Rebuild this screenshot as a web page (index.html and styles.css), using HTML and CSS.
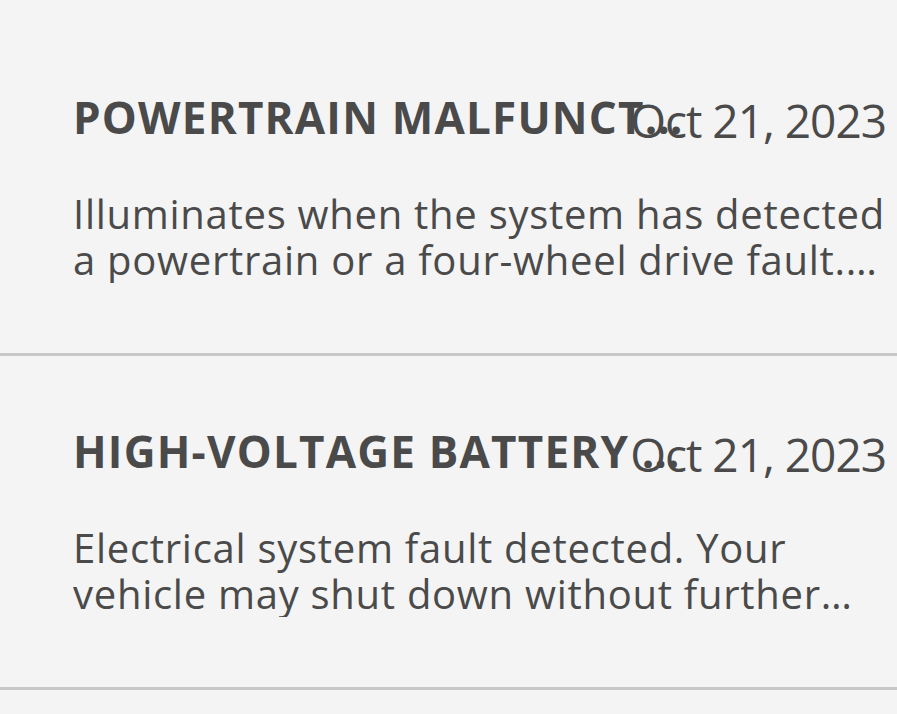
FILE: index.html
```html
<!DOCTYPE html>
<html>
<head>
<meta charset="utf-8">
<link rel="stylesheet" href="styles.css">
</head>
<body>
<ul class="alerts">
  <li class="alert">
    <div class="alert-head">
      <h2 class="alert-title">POWERTRAIN MALFUNCTION</h2>
      <span class="alert-date">Oct 21, 2023</span>
    </div>
    <p class="alert-desc">Illuminates when the system has detected a powertrain or a four-wheel drive fault. Contact an authorized dealer as soon as possible.</p>
  </li>
  <li class="alert">
    <div class="alert-head">
      <h2 class="alert-title">HIGH-VOLTAGE BATTERY FAULT</h2>
      <span class="alert-date">Oct 21, 2023</span>
    </div>
    <p class="alert-desc">Electrical system fault detected. Your vehicle may shut down without further warning. Contact an authorized dealer.</p>
  </li>
</ul>
</body>
</html>
```

FILE: styles.css
```css
html, body {
  margin: 0;
  padding: 0;
  background: #f4f4f4;
}
body {
  font-family: "Open Sans", "Liberation Sans", sans-serif;
  color: #4a4a4a;
}
.alerts {
  list-style: none;
  margin: 0;
  padding: 22px 0 0;
}
.alert {
  box-sizing: border-box;
  height: 334px;
  padding: 67px 11px 0 73px;
  border-bottom: 3px solid #c8c8c8;
}
.alert-head {
  position: relative;
  height: 56px;
}
.alert-title {
  width: 612px;
  margin: 0;
  font-size: 44px;
  font-weight: 700;
  letter-spacing: 1.2px;
  line-height: 56px;
  white-space: nowrap;
  overflow: hidden;
  text-overflow: ellipsis;
}
.alert-date {
  position: absolute;
  right: 0;
  top: 3px;
  font-size: 46px;
  letter-spacing: -1px;
  line-height: 56px;
  white-space: nowrap;
}
.alert-desc {
  margin: 46px 0 0;
  font-size: 40px;
  letter-spacing: 0.72px;
  line-height: 46px;
  display: -webkit-box;
  -webkit-line-clamp: 2;
  -webkit-box-orient: vertical;
  overflow: hidden;
}
```
